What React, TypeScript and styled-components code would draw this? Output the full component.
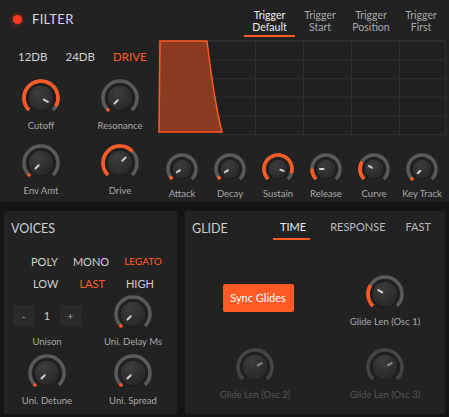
import React from "react";
import styled, { createGlobalStyle } from "styled-components";

const OR = "#ff5a24";
const Global = createGlobalStyle`
  body { margin:0; background:#151515; font-family: Lato, "Open Sans", sans-serif; }
  #root { width:449px; height:417px; overflow:hidden; }
`;

const Page = styled.div`display:flex;flex-direction:column;gap:9px;height:417px;`;
const Panel = styled.div`background:#222222;border-radius:3px;display:flex;flex-direction:column;`;
const Filter = styled(Panel)`height:202px;padding:0 4px 0 0;box-sizing:border-box;border-radius:0;`;
const Header = styled.div`display:flex;align-items:center;height:38px;`;
const Led = styled.div`width:9px;height:9px;border-radius:50%;background:#ff3b1f;box-shadow:0 0 5px #ff3b1f88;margin:0 10px 0 13px;`;
const Title = styled.div`color:#d8d8d8;font-size:13px;letter-spacing:0.3px;`;
const Tabs = styled.div`margin-left:auto;display:flex;height:36px;`;
const Tab = styled.div<{ $on?: boolean; $w: number }>`
  width:${p => p.$w}px;text-align:center;font-size:10.5px;line-height:12px;padding-top:8px;box-sizing:border-box;
  color:${p => (p.$on ? "#f0f0f0" : "#a8a8a8")};
  border-bottom:2px solid ${p => (p.$on ? OR : "transparent")};
`;
const Body = styled.div`display:flex;`;
const LeftCol = styled.div`width:161px;display:flex;flex-direction:column;`;
const Modes = styled.div<{ $gap: number; $pl: number; $h: number }>`display:flex;gap:${p => p.$gap}px;padding-left:${p => p.$pl}px;height:${p => p.$h}px;align-items:center;`;
const Mode = styled.div<{ $on?: boolean; $fs?: number }>`font-size:${p => p.$fs ?? 12}px;color:${p => (p.$on ? OR : "#d0d0d0")};`;
const KRow = styled.div<{ $cols: string; $h: number }>`display:grid;grid-template-columns:${p => p.$cols};height:${p => p.$h}px;`;
const RightCol = styled.div`flex:1;display:flex;flex-direction:column;padding-top:2px;`;
const Graph = styled.div`height:93px;border:1px solid #2c2c2c;background-color:#1f1f1f;position:relative;
  background-image:linear-gradient(#2e2e2e 1px,transparent 1px),linear-gradient(90deg,#2e2e2e 1px,transparent 1px);
  background-size:48px 18.6px;`;
const KnobCell = styled.div<{ $dim?: boolean }>`display:flex;flex-direction:column;align-items:center;justify-content:flex-end;
  gap:2px;font-size:9.5px;color:${p => (p.$dim ? "#555" : "#a8a8a8")};white-space:nowrap;`;

const Bottom = styled.div`display:flex;gap:8px;padding:0 4px 3px 4px;flex:1;`;
const Voices = styled(Panel)`width:173px;`;
const Glide = styled(Panel)`flex:1;`;
const PHead = styled.div`display:flex;align-items:center;height:34px;padding-left:7px;color:#cfcfcf;font-size:12.5px;`;
const GTabs = styled.div`display:flex;gap:20px;margin-left:auto;margin-right:14px;`;
const GTab = styled.div<{ $on?: boolean }>`font-size:11px;color:${p => (p.$on ? "#eee" : "#bbb")};padding:0 0 5px;
  margin-top:4px;border-bottom:2px solid ${p => (p.$on ? OR : "transparent")};
  ${p => p.$on && "padding-left:7px;padding-right:4px;margin-left:-7px;"}`;
const Stepper = styled.div`display:flex;align-items:center;gap:4px;`;
const StepBtn = styled.div`width:21px;height:21px;background:#2a2a2a;color:#aaa;font-size:10px;display:flex;align-items:center;justify-content:center;`;
const StepVal = styled.div`width:18px;text-align:center;color:#ccc;font-size:11px;`;
const VGrid = styled.div`display:grid;grid-template-columns:86px 86px;row-gap:6px;`;
const GGrid = styled.div`display:grid;grid-template-columns:140px 120px;row-gap:20px;margin-top:29px;`;
const SyncBtn = styled.button`background:${OR};color:#fff;border:none;border-radius:2px;font-family:inherit;font-size:11px;
  width:71px;height:28px;align-self:center;justify-self:center;margin-left:6px;margin-bottom:6px;padding:0;`;

function Knob({ v, size = 38, arc = true, dim = false }: { v: number; size?: number; arc?: boolean; dim?: boolean }) {
  const c = size / 2, r = c - 3, ir = r - 4;
  const pt = (deg: number, rad: number) => {
    const a = ((deg - 90) * Math.PI) / 180;
    return [c + rad * Math.cos(a), c + rad * Math.sin(a)];
  };
  const arcP = (a0: number, a1: number) => {
    const [x0, y0] = pt(a0, r), [x1, y1] = pt(a1, r);
    return `M${x0} ${y0} A${r} ${r} 0 ${a1 - a0 > 180 ? 1 : 0} 1 ${x1} ${y1}`;
  };
  const ang = -135 + 270 * v;
  const [a1x, a1y] = pt(ang, ir * 0.25), [a2x, a2y] = pt(ang, ir * 0.6);
  const id = `g${size}`;
  return (
    <svg width={size} height={size}>
      <defs>
        <radialGradient id={id} cx="40%" cy="30%" r="75%">
          <stop offset="0" stopColor="#3d3d3d" />
          <stop offset="1" stopColor="#262626" />
        </radialGradient>
      </defs>
      <path d={arcP(-135, 135)} stroke={dim ? "#444" : "#5a5a5a"} strokeWidth={3.5} fill="none" />
      {arc && v > 0.02 && <path d={arcP(-135, ang)} stroke={OR} strokeWidth={3.5} fill="none" />}
      {arc && v <= 0.02 && (() => { const [x, y] = pt(-135, r); return <circle cx={x} cy={y} r={1.8} fill={OR} />; })()}
      <circle cx={c} cy={c} r={ir} fill={`url(#${id})`} stroke="#1a1a1a" strokeWidth={1} />
      <line x1={a1x} y1={a1y} x2={a2x} y2={a2y} stroke={dim ? "#888" : "#cfcfcf"} strokeWidth={2} strokeLinecap="round" />
    </svg>
  );
}

const K = ({ v, label, size, arc, dim }: { v: number; label: string; size?: number; arc?: boolean; dim?: boolean }) => (
  <KnobCell $dim={dim}><Knob v={v} size={size} arc={arc} dim={dim} /><span>{label}</span></KnobCell>
);

export default function App() {
  return (
    <>
      <Global />
      <Page>
        <Filter>
          <Header>
            <Led /><Title>FILTER</Title>
            <Tabs>
              <Tab $on $w={51}>Trigger<br />Default</Tab>
              <Tab $w={50}>Trigger<br />Start</Tab>
              <Tab $w={52}>Trigger<br />Position</Tab>
              <Tab $w={48}>Trigger<br />First</Tab>
            </Tabs>
          </Header>
          <Body>
            <LeftCol>
              <Modes $gap={18} $pl={18} $h={37}><Mode $fs={11.5}>12DB</Mode><Mode $fs={11.5}>24DB</Mode><Mode $on $fs={11.5}>DRIVE</Mode></Modes>
              <KRow $cols="82px 76px" $h={56}>
                <K v={0.94} label="Cutoff" size={40} />
                <K v={0} label="Resonance" size={40} />
              </KRow>
              <KRow $cols="82px 76px" $h={65}>
                <K v={0} label="Env Amt" size={40} />
                <K v={0.67} label="Drive" size={40} />
              </KRow>
            </LeftCol>
            <RightCol>
              <Graph>
                <svg width="284" height="93" style={{ position: "absolute", left: -1, top: -1 }}>
                  <path d="M1 92 L2 1 L49 1 Q56 60 64 92 Z" fill="#8a3a1f" stroke={OR} strokeWidth={1.5} />
                </svg>
              </Graph>
              <KRow $cols="repeat(6, 48px)" $h={64}>
                <K v={0.05} label="Attack" size={34} />
                <K v={0.05} label="Decay" size={34} />
                <K v={0.9} label="Sustain" size={34} />
                <K v={0.17} label="Release" size={34} />
                <K v={0.28} label="Curve" size={34} />
                <K v={0} label="Key Track" size={34} />
              </KRow>
            </RightCol>
          </Body>
        </Filter>
        <Bottom>
          <Voices>
            <PHead>VOICES</PHead>
            <Modes $gap={15} $pl={27} $h={22} style={{ marginTop: 5 }}>
              <Mode $fs={11}>POLY</Mode><Mode $fs={11}>MONO</Mode><Mode $on $fs={10}>LEGATO</Mode>
            </Modes>
            <Modes $gap={21} $pl={29} $h={22}>
              <Mode $fs={11}>LOW</Mode><Mode $on $fs={11}>LAST</Mode><Mode $fs={11}>HIGH</Mode>
            </Modes>
            <VGrid>
              <KnobCell>
                <div style={{ flex: 1 }} />
                <Stepper><StepBtn>-</StepBtn><StepVal>1</StepVal><StepBtn>+</StepBtn></Stepper>
                <div style={{ height: 6 }} />
                <span>Unison</span>
              </KnobCell>
              <K v={0} label="Uni. Delay Ms" size={40} />
              <K v={0} label="Uni. Detune" size={40} />
              <K v={0} label="Uni. Spread" size={40} />
            </VGrid>
          </Voices>
          <Glide>
            <PHead>GLIDE
              <GTabs><GTab $on>TIME</GTab><GTab>RESPONSE</GTab><GTab>FAST</GTab></GTabs>
            </PHead>
            <GGrid>
              <SyncBtn>Sync Glides</SyncBtn>
              <K v={0.28} label="Glide Len (Osc 1)" size={40} />
              <K v={0.72} label="Glide Len (Osc 2)" size={40} arc={false} dim />
              <K v={0.72} label="Glide Len (Osc 3)" size={40} arc={false} dim />
            </GGrid>
          </Glide>
        </Bottom>
      </Page>
    </>
  );
}
